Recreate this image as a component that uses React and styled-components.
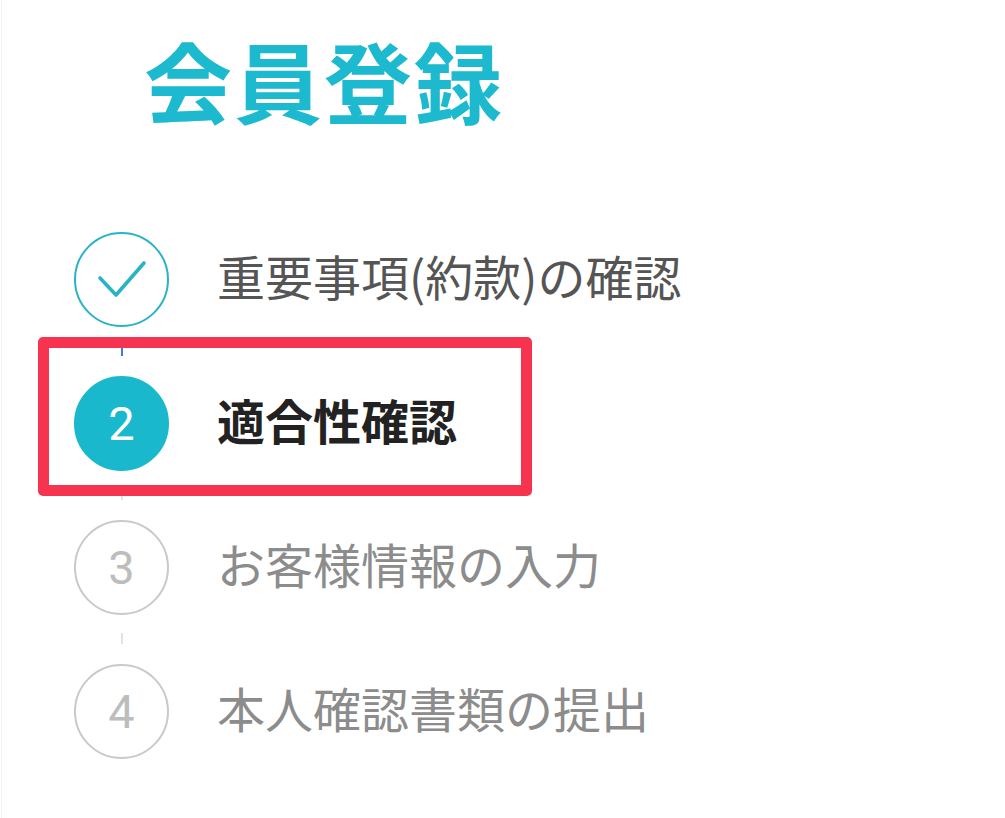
import React from "react";
import styled, { createGlobalStyle } from "styled-components";

const GlobalStyle = createGlobalStyle`
  html, body {
    margin: 0;
    padding: 0;
    background: #ffffff;
  }
  body {
    font-family: "Noto Sans CJK JP", "Noto Sans", sans-serif;
  }
`;

const Page = styled.div`
  min-height: 818px;
  box-sizing: border-box;
  margin-left: 1px;
  border-left: 1px solid #f2f2f2;
  padding: 27px 0 0 72px;
`;

const Title = styled.h1`
  margin: 0 0 0 70px;
  font-size: 88px;
  line-height: 103px;
  font-weight: 700;
  letter-spacing: 2px;
  color: #1cb9cf;
`;

const Steps = styled.div`
  display: flex;
  flex-direction: column;
  margin-top: 102px;
`;

const Row = styled.div`
  position: relative;
  display: flex;
  align-items: center;
  gap: 48px;
  height: 95px;

  ${(p) =>
    p.$highlight &&
    `
    &::after {
      content: "";
      position: absolute;
      top: -39px;
      left: -36px;
      width: 494px;
      height: 159px;
      box-sizing: border-box;
      border: 11px solid #f7344f;
      border-radius: 5px;
      pointer-events: none;
    }
  `}
`;

const Circle = styled.div`
  flex: 0 0 auto;
  width: 95px;
  height: 95px;
  box-sizing: border-box;
  border-radius: 50%;
  display: flex;
  align-items: center;
  justify-content: center;
  font-family: Roboto, "Liberation Sans", sans-serif;
  font-weight: 400;
  font-size: 47px;
  border: 2px solid
    ${(p) => (p.$state === "done" ? "#2ab3c6" : p.$state === "current" ? "#1ab8cc" : "#c9c9c9")};
  background: ${(p) => (p.$state === "current" ? "#1ab8cc" : "#ffffff")};
  color: ${(p) => (p.$state === "current" ? "#ffffff" : "#bdbdbd")};
`;

const Label = styled.span`
  font-size: 48px;
  line-height: 1;
  white-space: nowrap;
  font-weight: ${(p) => (p.$state === "current" ? 700 : 400)};
  color: ${(p) =>
    p.$state === "current" ? "#222222" : p.$state === "done" ? "#555555" : "#8c8c8c"};
  margin-top: -10px;
`;

const Connector = styled.div`
  width: 2px;
  height: 11px;
  margin: 18px 0 20px 47px;
  background: ${(p) => (p.$active ? "#3d7fd6" : "#e3e3e3")};
`;

const Check = () => (
  <svg width="52" height="40" viewBox="0 0 52 40" fill="none">
    <path
      d="M4 18 L20 35 L48 3"
      stroke="#2ab3c6"
      strokeWidth="3.6"
      strokeLinecap="round"
      strokeLinejoin="round"
    />
  </svg>
);

const steps = [
  { label: "重要事項(約款)の確認", state: "done" },
  { label: "適合性確認", state: "current" },
  { label: "お客様情報の入力", state: "todo" },
  { label: "本人確認書類の提出", state: "todo" },
];

export default function App() {
  return (
    <>
      <GlobalStyle />
      <Page>
        <Title>会員登録</Title>
        <Steps>
          {steps.map((s, i) => (
            <React.Fragment key={s.label}>
              {i > 0 && <Connector $active={i === 1} />}
              <Row $highlight={s.state === "current"}>
                <Circle $state={s.state}>
                  {s.state === "done" ? <Check /> : i + 1}
                </Circle>
                <Label $state={s.state}>{s.label}</Label>
              </Row>
            </React.Fragment>
          ))}
        </Steps>
      </Page>
    </>
  );
}
